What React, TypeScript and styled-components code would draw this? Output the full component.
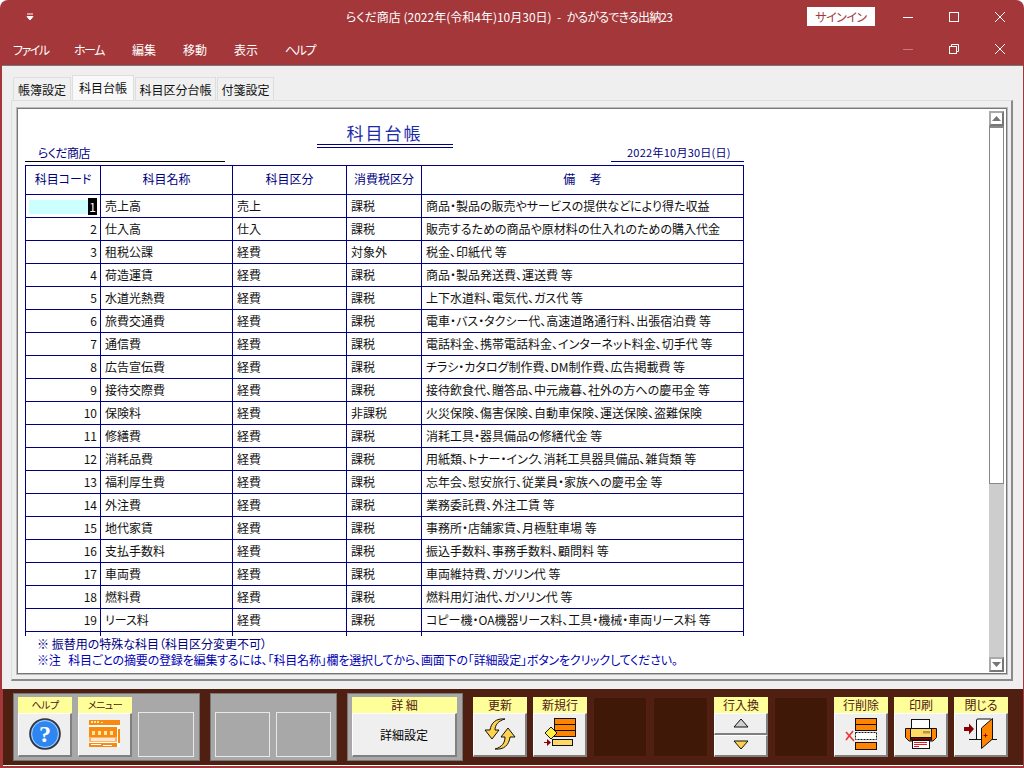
import React from 'react';
import styled, { createGlobalStyle } from 'styled-components';

const RED = '#a4373a';
const NAVY = '#000080';

const rows = [
  ['1', '売上高', '売上', '課税', '商品・製品の販売やサービスの提供などにより得た収益'],
  ['2', '仕入高', '仕入', '課税', '販売するための商品や原材料の仕入れのための購入代金'],
  ['3', '租税公課', '経費', '対象外', '税金、印紙代 等'],
  ['4', '荷造運賃', '経費', '課税', '商品・製品発送費、運送費 等'],
  ['5', '水道光熱費', '経費', '課税', '上下水道料、電気代、ガス代 等'],
  ['6', '旅費交通費', '経費', '課税', '電車・バス・タクシー代、高速道路通行料、出張宿泊費 等'],
  ['7', '通信費', '経費', '課税', '電話料金、携帯電話料金、インターネット料金、切手代 等'],
  ['8', '広告宣伝費', '経費', '課税', 'チラシ・カタログ制作費、DM制作費、広告掲載費 等'],
  ['9', '接待交際費', '経費', '課税', '接待飲食代、贈答品、中元歳暮、社外の方への慶弔金 等'],
  ['10', '保険料', '経費', '非課税', '火災保険、傷害保険、自動車保険、運送保険、盗難保険'],
  ['11', '修繕費', '経費', '課税', '消耗工具・器具備品の修繕代金 等'],
  ['12', '消耗品費', '経費', '課税', '用紙類、トナー・インク、消耗工具器具備品、雑貨類 等'],
  ['13', '福利厚生費', '経費', '課税', '忘年会、慰安旅行、従業員・家族への慶弔金 等'],
  ['14', '外注費', '経費', '課税', '業務委託費、外注工賃 等'],
  ['15', '地代家賃', '経費', '課税', '事務所・店舗家賃、月極駐車場 等'],
  ['16', '支払手数料', '経費', '課税', '振込手数料、事務手数料、顧問料 等'],
  ['17', '車両費', '経費', '課税', '車両維持費、ガソリン代 等'],
  ['18', '燃料費', '経費', '課税', '燃料用灯油代、ガソリン代 等'],
  ['19', 'リース料', '経費', '課税', 'コピー機・OA機器リース料、工具・機械・車両リース料 等'],
];

const menus = [
  { text: 'ファイル', kana: true },
  { text: 'ホーム', kana: true },
  { text: '編集' },
  { text: '移動' },
  { text: '表示' },
  { text: 'ヘルプ', kana: true },
];

const tabs = [
  { text: '帳簿設定', width: 58 },
  { text: '科目台帳', width: 62 },
  { text: '科目区分台帳', width: 81 },
  { text: '付箋設定', width: 57 },
];

const HelpIcon = () => (
  <svg width="32" height="32" viewBox="0 0 32 32">
    <circle cx="16" cy="16" r="15" fill="#2f86f0" stroke="#333" strokeWidth="1.6" />
    <circle cx="16" cy="16" r="13.4" fill="none" stroke="#cfe2fa" strokeWidth="0.8" />
    <text x="16" y="24" textAnchor="middle" fontSize="24" fontWeight="700" fontFamily="Liberation Serif, serif" fill="#fff">?</text>
  </svg>
);

const MenuIcon = () => (
  <svg width="32" height="28" viewBox="0 0 32 28">
    <rect x="0" y="0" width="31" height="27" fill="#fff" />
    <rect x="0" y="0" width="31" height="5" fill="#f78a10" />
    <rect x="2" y="1" width="2" height="2" fill="#ffe9a0" />
    <rect x="5" y="1" width="2" height="2" fill="#ffe9a0" />
    <rect x="8" y="1" width="2" height="2" fill="#ffe9a0" />
    <rect x="12" y="2" width="2" height="1" fill="#ffe9a0" />
    <rect x="0" y="7" width="28" height="10" fill="#f78a10" />
    <rect x="3" y="11" width="3" height="4" fill="#ffe9a0" />
    <rect x="9" y="11" width="3" height="4" fill="#ffe9a0" />
    <rect x="15" y="11" width="3" height="4" fill="#ffe9a0" />
    <rect x="21" y="11" width="3" height="4" fill="#ffe9a0" />
    <rect x="29" y="9" width="2" height="14" fill="#f78a10" />
    <rect x="0" y="17" width="28" height="5" fill="#fbb56a" />
    <rect x="2" y="18" width="24" height="3" fill="#ffe8cf" />
    <rect x="0" y="23" width="28" height="4" fill="#f78a10" />
    <rect x="2" y="24" width="10" height="1" fill="#fff" />
    <rect x="14" y="25" width="9" height="1" fill="#fff" />
  </svg>
);

const RefreshIcon = () => (
  <svg width="34" height="32" viewBox="0 0 34 32">
    <path d="M22 1 C13 0 8 5 7 12 L2 12 L9 21 L16 12 L12 12 C12 7 15 3 22 1 Z" fill="#ffd24d" stroke="#111" strokeWidth="1" strokeLinejoin="round" />
    <path d="M12 31 C21 32 26 27 27 19 L32 19 L25 10 L18 19 L22 19 C22 25 19 29 12 31 Z" fill="#ffd24d" stroke="#111" strokeWidth="1" strokeLinejoin="round" />
  </svg>
);

const NewRowIcon = () => (
  <svg width="32" height="32" viewBox="0 0 32 32">
    <rect x="10.5" y="0.5" width="21" height="18" fill="#ff8400" stroke="#111" />
    <path d="M10 6.5H32M10 12.5H32" stroke="#111" />
    <path d="M7 9 L13 15 L7 21 L1 15 Z" fill="#ffee44" stroke="#111" />
    <rect x="8.5" y="21.5" width="20" height="6" fill="#ffd966" stroke="#111" />
    <path d="M0 24h3v-3l4 3.500-4 3.500v-3h-3z" fill="#8b0000" />
  </svg>
);

const DeleteRowIcon = () => (
  <svg width="32" height="32" viewBox="0 0 32 32">
    <rect x="10.5" y="0.500" width="21" height="12" fill="#ff8400" stroke="#111" />
    <path d="M10 6.500H32" stroke="#111" />
    <rect x="10.500" y="14.500" width="21" height="7" fill="#fff" stroke="#111" strokeDasharray="2 1" />
    <rect x="10.500" y="24.500" width="21" height="7" fill="#ff8400" stroke="#111" />
    <path d="M1 14 L9 23 M8 13 L1 22" stroke="#ee3333" strokeWidth="1.6" fill="none" />
  </svg>
);

const PrinterIcon = () => (
  <svg width="32" height="30" viewBox="0 0 32 30">
    <rect x="6.500" y="0.500" width="18" height="10" fill="#fff" stroke="#111" />
    <path d="M0.500 9.500H31.500V18.500L28 22H4L0.500 18.500Z" fill="#ff8400" stroke="#111" />
    <rect x="5.500" y="9.500" width="21" height="9" fill="#ffd966" stroke="#111" />
    <rect x="18" y="12" width="7" height="2.500" fill="#b09a50" />
    <rect x="5.500" y="18.500" width="21" height="2.500" fill="#8b0000" stroke="#111" />
    <rect x="7.500" y="21.500" width="17" height="8" fill="#fff" stroke="#111" />
    <path d="M9 23.500H22M9 25.500H22M9 27.500H14" stroke="#e02020" />
  </svg>
);

const DoorIcon = () => (
  <svg width="34" height="32" viewBox="0 0 34 32">
    <path d="M5 21.500H33" stroke="#111" />
    <path d="M12.500 21 V2 Q12.500 1 14 1 H27" fill="#fff" stroke="#111" />
    <rect x="13" y="2" width="13" height="19" fill="#fff" />
    <path d="M17.500 10 L28.500 0.500 V21 L17.500 30.500 Z" fill="#ff8400" stroke="#111" />
    <path d="M19.500 17.500h4M21.500 15.500v4" stroke="#8b0000" />
    <path d="M0 9h5v-3.500l5 5.500-5 5.500v-3.500h-5z" fill="#8b0000" />
  </svg>
);

const Triangle = ({ $up }: { $up?: boolean }) => (
  <svg width="16" height="10" viewBox="0 0 16 10">
    <path
      d={$up ? 'M8 1 L15 9 H1 Z' : 'M1 1 H15 L8 9 Z'}
      fill={$up ? '#d0d0d0' : '#ffd24d'}
      stroke="#111"
    />
  </svg>
);

const App: React.FC = () => {
  return (
    <>
      <GlobalStyle />
      <Window>
        <TitleBar>
          <QuickMenu>
            <svg width="8" height="8" viewBox="0 0 8 8">
              <path d="M1 1h6M1 3.500h6L4 7z" stroke="#fff" strokeWidth="1" fill="#fff" />
            </svg>
          </QuickMenu>
          <Title>
            らくだ商店 (2022年(令和4年)10月30日)&nbsp;&nbsp;-&nbsp;&nbsp;<AppName>かるがるできる出納23</AppName>
          </Title>
          <SignIn>サインイン</SignIn>
          <CaptionButton>
            <svg width="12" height="12" viewBox="0 0 12 12"><path d="M1 6.500H11" stroke="#fff" /></svg>
          </CaptionButton>
          <CaptionButton>
            <svg width="12" height="12" viewBox="0 0 12 12"><rect x="1.500" y="1.500" width="9" height="9" fill="none" stroke="#fff" /></svg>
          </CaptionButton>
          <CaptionButton>
            <svg width="12" height="12" viewBox="0 0 12 12"><path d="M1 1L11 11M11 1L1 11" stroke="#fff" /></svg>
          </CaptionButton>
        </TitleBar>
        <MenuBar>
          <MenuList>
            {menus.map((m) => (
              <MenuItem key={m.text} $kana={m.kana}>{m.text}</MenuItem>
            ))}
          </MenuList>
          <CaptionButton>
            <svg width="12" height="12" viewBox="0 0 12 12"><path d="M1 6.500H11" stroke="#d0767a" /></svg>
          </CaptionButton>
          <CaptionButton>
            <svg width="12" height="12" viewBox="0 0 12 12">
              <rect x="1.500" y="3.500" width="7" height="7" fill="none" stroke="#fff" />
              <path d="M3.500 3V1.500H10.500V8.500H9" fill="none" stroke="#fff" />
            </svg>
          </CaptionButton>
          <CaptionButton>
            <svg width="12" height="12" viewBox="0 0 12 12"><path d="M1 1L11 11M11 1L1 11" stroke="#fff" /></svg>
          </CaptionButton>
        </MenuBar>

        <Workspace>
          <TabStrip>
            {tabs.map((t, i) => (
              <Tab key={t.text} $active={i === 1} $width={t.width}>{t.text}</Tab>
            ))}
          </TabStrip>
          <TabPanel>
            <Frame>
              <Report>
                <ReportHead>
                  <ShopName>らくだ商店</ShopName>
                  <ReportTitle>科目台帳</ReportTitle>
                  <ReportDate>2022年10月30日(日)</ReportDate>
                </ReportHead>
                <TableClip>
                  <Ledger>
                    <colgroup>
                      <col width="75" />
                      <col width="132" />
                      <col width="114" />
                      <col width="75" />
                      <col width="322" />
                    </colgroup>
                    <thead>
                      <tr>
                        <HeadCell>科目コード</HeadCell>
                        <HeadCell>科目名称</HeadCell>
                        <HeadCell>科目区分</HeadCell>
                        <HeadCell>消費税区分</HeadCell>
                        <HeadCell>備　 考</HeadCell>
                      </tr>
                    </thead>
                    <tbody>
                      {rows.map((r, i) => (
                        <tr key={r[0]}>
                          <NumCell>
                            {i === 0 ? (
                              <ActiveField><ActiveValue>{r[0]}</ActiveValue></ActiveField>
                            ) : (
                              r[0]
                            )}
                          </NumCell>
                          <Cell>{r[1]}</Cell>
                          <Cell>{r[2]}</Cell>
                          <Cell>{r[3]}</Cell>
                          <Cell>{r[4]}</Cell>
                        </tr>
                      ))}
                      <tr>
                        <NumCell />
                        <Cell />
                        <Cell />
                        <Cell />
                        <Cell />
                      </tr>
                    </tbody>
                  </Ledger>
                </TableClip>
                <Notes>
                  <Note>※ 振替用の特殊な科目（科目区分変更不可）</Note>
                  <Note $strong>※注&nbsp;&nbsp; 科目ごとの摘要の登録を編集するには、「科目名称」欄を選択してから、画面下の「詳細設定」ボタンをクリックしてください。</Note>
                </Notes>
              </Report>
              <ScrollBar>
                <ScrollButton>
                  <svg width="9" height="5" viewBox="0 0 9 5"><path d="M4.500 0L9 5H0z" fill="#777" /></svg>
                </ScrollButton>
                <ScrollThumb />
                <ScrollTrack />
                <ScrollButton>
                  <svg width="9" height="5" viewBox="0 0 9 5"><path d="M0 0H9L4.500 5z" fill="#777" /></svg>
                </ScrollButton>
              </ScrollBar>
            </Frame>
          </TabPanel>
        </Workspace>

        <ButtonBar>
          <GrayGroup $width={187}>
            <ActionButton label="ヘルプ" small><HelpIcon /></ActionButton>
            <ActionButton label="メニュー" small><MenuIcon /></ActionButton>
            <EmptySlot />
          </GrayGroup>
          <GrayGroup $width={127}>
            <EmptySlot />
            <EmptySlot />
          </GrayGroup>
          <GrayGroup $width={116}>
            <ActionButton label="詳 細"><DetailText>詳細設定</DetailText></ActionButton>
          </GrayGroup>
          <ActionRow>
            <ActionButton label="更新"><RefreshIcon /></ActionButton>
            <ActionButton label="新規行"><NewRowIcon /></ActionButton>
            <DarkSlot />
            <DarkSlot $wide />
            <SwapButton>
              <ButtonLabel>行入換</ButtonLabel>
              <SwapFace><Triangle $up /></SwapFace>
              <SwapFace><Triangle /></SwapFace>
            </SwapButton>
            <DarkSlot />
            <ActionButton label="行削除"><DeleteRowIcon /></ActionButton>
            <ActionButton label="印刷"><PrinterIcon /></ActionButton>
            <ActionButton label="閉じる"><DoorIcon /></ActionButton>
          </ActionRow>
        </ButtonBar>
      </Window>
    </>
  );
};

const ActionButton: React.FC<{ label: string; small?: boolean; children: React.ReactNode }> = ({ label, small, children }) => (
  <ButtonBox>
    <ButtonLabel $small={small}>{label}</ButtonLabel>
    <ButtonFace>{children}</ButtonFace>
  </ButtonBox>
);

export default App;

const GlobalStyle = createGlobalStyle`
  html, body {
    margin: 0;
    padding: 0;
    background: #fff;
  }
  body {
    font-family: "Noto Sans CJK JP", "Liberation Sans", sans-serif;
    font-size: 12px;
    font-feature-settings: "palt";
    overflow: hidden;
  }
`;

const Window = styled.div`
  width: 1024px;
  height: 768px;
  box-sizing: border-box;
  display: flex;
  flex-direction: column;
  background: ${RED};
  border-radius: 8px 8px 0 0;
  padding: 0 1px 2px 2px;
`;

const TitleBar = styled.div`
  height: 33px;
  display: flex;
  align-items: center;
  flex: none;
  color: #fff;
`;

const QuickMenu = styled.div`
  width: 56px;
  padding-left: 24px;
  box-sizing: border-box;
  display: flex;
`;

const Title = styled.div`
  flex: 1;
  padding-left: 288px;
  font-size: 12px;
  white-space: nowrap;
`;

const AppName = styled.span`
  letter-spacing: -0.8px;
`;

const SignIn = styled.div`
  width: 68px;
  height: 19px;
  margin-right: 10px;
  background: #fff;
  color: ${RED};
  font-size: 12px;
  line-height: 19px;
  text-align: center;
  letter-spacing: -0.5px;
`;

const CaptionButton = styled.div`
  width: 46px;
  display: flex;
  justify-content: center;
`;

const MenuBar = styled.div`
  height: 32px;
  flex: none;
  display: flex;
  align-items: center;
`;

const MenuList = styled.div`
  flex: 1;
  display: grid;
  grid-template-columns: 61px 58px 51px 51px 51px auto;
  padding-left: 11px;
  color: #fff;
  font-size: 12px;
`;

const MenuItem = styled.span<{ $kana?: boolean }>`
  white-space: nowrap;
  letter-spacing: ${(p) => (p.$kana ? '-1.5px' : '0')};
`;

const Workspace = styled.div`
  flex: 1;
  min-height: 0;
  background: #efefef;
  border-top: 1px solid #777;
  padding: 9px 10px 8px 9px;
  display: flex;
  flex-direction: column;
`;

const TabStrip = styled.div`
  display: flex;
  align-items: flex-end;
  height: 25px;
  padding-left: 2px;
  flex: none;
`;

const Tab = styled.div<{ $active?: boolean; $width: number }>`
  width: ${(p) => p.$width}px;
  height: ${(p) => (p.$active ? 25 : 23)}px;
  line-height: 24px;
  margin-right: 1px;
  box-sizing: border-box;
  border: 1px solid #dedede;
  border-bottom: none;
  background: ${(p) => (p.$active ? '#f9f9f9' : '#f0f0f0')};
  color: #111;
  font-size: 12px;
  text-align: center;
  white-space: nowrap;
`;

const TabPanel = styled.div`
  flex: 1;
  min-height: 0;
  box-sizing: border-box;
  border: 1px solid #dedede;
  border-right: 2px solid #8a8a8a;
  border-bottom: 2px solid #8a8a8a;
  padding: 7px 4px 5px 5px;
  display: flex;
`;

const Frame = styled.div`
  flex: 1;
  min-width: 0;
  display: flex;
  justify-content: space-between;
  background: #fff;
  border: 1px solid #777;
  outline: 1px solid #bbb;
  padding: 2px 2px 1px 0;
`;

const Report = styled.div`
  width: 719px;
  margin-left: 7px;
  display: flex;
  flex-direction: column;
`;

const ReportHead = styled.div`
  height: 51px;
  display: grid;
  grid-template-columns: 1fr auto 1fr;
  align-items: end;
  color: ${NAVY};
`;

const ShopName = styled.div`
  width: 200px;
  box-sizing: border-box;
  height: 18px;
  line-height: 17px;
  padding-left: 13px;
  border-bottom: 1px solid #000;
  font-size: 12px;
  letter-spacing: -0.6px;
`;

const ReportTitle = styled.div`
  align-self: start;
  width: 136px;
  margin: 9px 0 0;
  box-sizing: border-box;
  height: 28px;
  border-bottom: 4px double ${NAVY};
  text-align: center;
  font-size: 17px;
  letter-spacing: 2px;
  line-height: 26px;
  color: #1a2aa8;
`;

const ReportDate = styled.div`
  width: 133px;
  justify-self: end;
  box-sizing: border-box;
  height: 18px;
  line-height: 17px;
  padding-left: 16px;
  border-bottom: 1px solid ${NAVY};
  font-size: 11px;
  white-space: nowrap;
  letter-spacing: 0.25px;
`;

const TableClip = styled.div`
  height: 471px;
  margin-top: 3px;
  overflow: hidden;
  flex: none;
`;

const Ledger = styled.table`
  width: 719px;
  table-layout: fixed;
  border-collapse: collapse;
  font-size: 12px;
`;

const HeadCell = styled.th`
  height: 25px;
  padding: 0 0 3px;
  border: 1px solid ${NAVY};
  color: ${NAVY};
  font-weight: 400;
  text-align: center;
  white-space: nowrap;
`;

const Cell = styled.td`
  height: 22px;
  padding: 0 0 0 4px;
  border: 1px solid ${NAVY};
  color: #111;
  white-space: nowrap;
  overflow: hidden;
  line-height: 16px;
`;

const NumCell = styled(Cell)`
  padding: 0 3px 0 0;
  text-align: right;
`;

const ActiveField = styled.div`
  margin-left: 3px;
  height: 14px;
  line-height: 14px;
  background: #ccffff;
  margin-top: 1px;
`;

const ActiveValue = styled.span`
  background: #000;
  color: #fff;
  padding: 0 1px;
`;

const Notes = styled.div`
  padding: 0 0 0 12px;
  display: flex;
  flex-direction: column;
  width: 700px;
`;

const Note = styled.div<{ $strong?: boolean }>`
  height: 16px;
  line-height: 16px;
  font-size: 12px;
  letter-spacing: ${(p) => (p.$strong ? '-0.17px' : '0')};
  white-space: nowrap;
  color: ${(p) => (p.$strong ? '#0000b4' : NAVY)};
`;

const ScrollBar = styled.div`
  width: 15px;
  display: flex;
  flex-direction: column;
  background: #cdcdcd;
`;

const ScrollButton = styled.div`
  height: 15px;
  box-sizing: border-box;
  border: 2px solid #777;
  border-left-color: #aaa;
  border-top-color: #aaa;
  background: #fff;
  display: flex;
  align-items: center;
  justify-content: center;
  flex: none;
`;

const ScrollThumb = styled.div`
  height: 358px;
  flex: none;
  box-sizing: border-box;
  border: 1px solid #888;
  border-top: 2px solid #888;
  background: #fff;
`;

const ScrollTrack = styled.div`
  flex: 1;
`;

const ButtonBar = styled.div`
  height: 77px;
  flex: none;
  display: flex;
  align-items: center;
  gap: 10px;
  box-sizing: border-box;
  padding: 0 0 1px 10px;
  margin-left: 1px;
  background: #4f2012;
  border-bottom: 1px solid #fff;
`;

const GrayGroup = styled.div<{ $width: number }>`
  width: ${(p) => p.$width}px;
  height: 68px;
  box-sizing: border-box;
  display: flex;
  gap: 6px;
  padding: 3px 5px 3px 4px;
  background: #a8a8a8;
  border: 1px solid #777;
  flex: none;
`;

const ActionRow = styled.div`
  display: flex;
  gap: 6px;
  height: 60px;
`;

const ButtonBox = styled.div`
  flex: 1;
  min-width: 54px;
  height: 60px;
  display: flex;
  flex-direction: column;
`;

const ButtonLabel = styled.div<{ $small?: boolean }>`
  height: 16px;
  line-height: 16px;
  flex: none;
  background: #ffff99;
  color: #4f2012;
  text-align: center;
  font-size: ${(p) => (p.$small ? 10 : 12)}px;
  letter-spacing: ${(p) => (p.$small ? '-0.5px' : '0')};
  white-space: nowrap;
`;

const ButtonFace = styled.div`
  flex: 1;
  box-sizing: border-box;
  background: #efefef;
  border-top: 1px solid #fff;
  border-left: 1px solid #fff;
  border-right: 2px solid #808080;
  border-bottom: 2px solid #808080;
  display: flex;
  align-items: center;
  justify-content: center;
`;

const DetailText = styled.span`
  color: #000;
  font-size: 12px;
`;

const SwapButton = styled.div`
  width: 54px;
  height: 60px;
  display: flex;
  flex-direction: column;
`;

const SwapFace = styled(ButtonFace)`
  height: 22px;
`;

const EmptySlot = styled.div`
  flex: 1;
  margin-top: 15px;
  height: 45px;
  box-sizing: border-box;
  border: 1px solid #e8e8e8;
`;

const DarkSlot = styled.div<{ $wide?: boolean }>`
  width: ${(p) => (p.$wide ? 55 : 54)}px;
  height: 60px;
  box-sizing: border-box;
  background: #3f1808;
  border: 1px solid #552010;
`;
